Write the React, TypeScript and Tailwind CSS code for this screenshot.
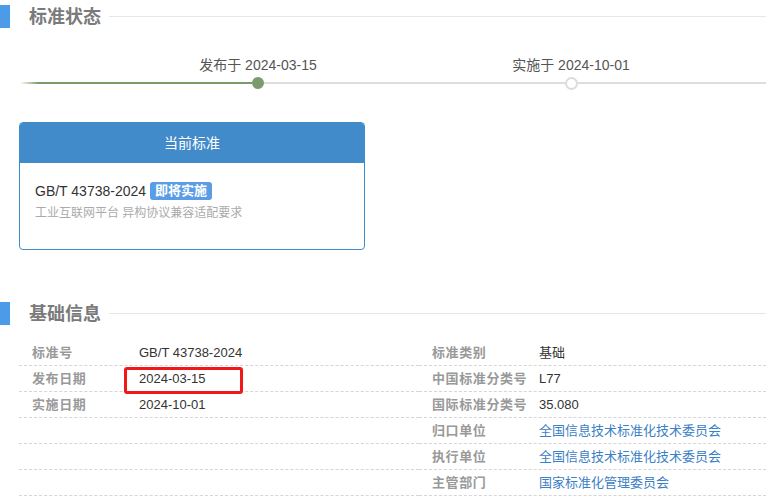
import React from "react";

const font = { fontFamily: '"Liberation Sans", Arial, "Noto Sans CJK SC", sans-serif' };

function SectionHeader({ title }: { title: string }) {
  return (
    <div className="flex items-center h-[23px]">
      <div className="w-[10px] h-full bg-[#4b9be9]" />
      <div className="ml-[19px] text-[18px] font-bold text-[#7a7a7a] leading-none">{title}</div>
      <div className="flex-1 h-px bg-[#e6e6e6] ml-[8px]" />
    </div>
  );
}

type Row = { label: string; value?: string; link?: boolean; mark?: boolean };

function InfoTable({ rows, className }: { rows: Row[]; className: string }) {
  return (
    <div className={className}>
      {rows.map((r, i) => (
        <div key={i} className="flex items-center h-[26px] border-b border-dashed border-[#d6d6d6]">
          <div className="w-[107px] pl-[13px] text-[13px] font-bold text-[#999] tracking-[0.6px] whitespace-nowrap">{r.label}</div>
          <div className="relative flex-1 h-full flex items-center pl-[13px] text-[13px] whitespace-nowrap">
            {r.mark && (
              <div className="absolute left-[-2px] top-[1px] w-[119px] h-[27px] border-[3px] border-[#f01818] rounded-[3px]" />
            )}
            <span className={r.link ? "text-[#3a80c5]" : "text-[#333]"}>{r.value}</span>
          </div>
        </div>
      ))}
    </div>
  );
}

export default function App() {
  const left: Row[] = [
    { label: "标准号", value: "GB/T 43738-2024" },
    { label: "发布日期", value: "2024-03-15", mark: true },
    { label: "实施日期", value: "2024-10-01" },
    { label: "" },
    { label: "" },
    { label: "" },
  ];
  const right: Row[] = [
    { label: "标准类别", value: "基础" },
    { label: "中国标准分类号", value: "L77" },
    { label: "国际标准分类号", value: "35.080" },
    { label: "归口单位", value: "全国信息技术标准化技术委员会", link: true },
    { label: "执行单位", value: "全国信息技术标准化技术委员会", link: true },
    { label: "主管部门", value: "国家标准化管理委员会", link: true },
  ];

  return (
    <div className="w-[766px] h-[502px] overflow-hidden bg-white" style={font}>
      <div className="pt-[5px]">
        <SectionHeader title="标准状态" />
      </div>

      {/* timeline labels */}
      <div className="flex mt-[27px] h-[20px] leading-[20px] text-[14px] text-[#555]">
        <div className="ml-[178px] w-[160px] text-center whitespace-nowrap">发布于 2024-03-15</div>
        <div className="ml-[153px] w-[160px] text-center whitespace-nowrap">实施于 2024-10-01</div>
      </div>

      {/* timeline line */}
      <div className="flex items-center h-[12px] mt-[2px] ml-[20px]">
        <div className="w-[232px] h-[2px] bg-gradient-to-r from-white via-[#7b9b6c] via-[8%] to-[#7b9b6c]" />
        <div className="w-[12px] h-[12px] rounded-full bg-[#7b9b6c]" />
        <div className="w-[301px] h-[2px] bg-[#dddddd]" />
        <div className="w-[13px] h-[13px] rounded-full bg-white border-2 border-[#dcdcdc]" />
        <div className="flex-1 h-[2px] bg-[#dddddd]" />
      </div>

      {/* card */}
      <div className="ml-[19px] mt-[33px] w-[346px] h-[128px] border border-[#428bca] rounded-[4px] overflow-hidden">
        <div className="h-[40px] bg-[#428bca] flex items-center justify-center text-white text-[14px]">当前标准</div>
        <div className="pl-[15px] pt-[18px]">
          <div className="flex items-center h-[20px]">
            <span className="text-[14px] text-[#333]">GB/T 43738-2024</span>
            <span className="ml-[4px] h-[18px] px-[5px] flex items-center rounded-[3px] bg-[#5a9de6] text-white text-[13px] font-bold">即将实施</span>
          </div>
          <div className="mt-[4px] text-[12px] leading-[16px] text-[#aaa]">工业互联网平台 异构协议兼容适配要求</div>
        </div>
      </div>

      <div className="mt-[52px]">
        <SectionHeader title="基础信息" />
      </div>

      <div className="flex mt-[15px]">
        <InfoTable rows={left} className="ml-[19px] w-[400px]" />
        <InfoTable rows={right} className="flex-1" />
      </div>
    </div>
  );
}
